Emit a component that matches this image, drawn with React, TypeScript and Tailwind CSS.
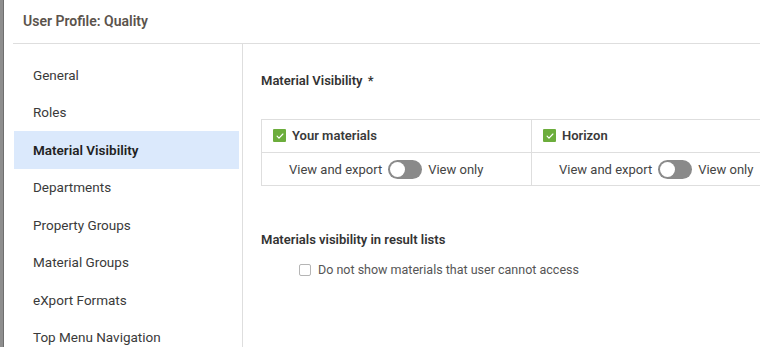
import * as React from "react"

const navItems = [
  "General",
  "Roles",
  "Material Visibility",
  "Departments",
  "Property Groups",
  "Material Groups",
  "eXport Formats",
  "Top Menu Navigation",
]

function GreenCheck() {
  return (
    <span className="flex h-[13px] w-[13px] shrink-0 items-center justify-center rounded-[1px] bg-[#6cad3c]">
      <svg viewBox="0 0 12 12" className="h-[10px] w-[10px]" fill="none">
        <path d="M2.5 6.2l2.3 2.3L9.5 3.6" stroke="white" strokeWidth="1.4" strokeLinecap="round" strokeLinejoin="round" />
      </svg>
    </span>
  )
}

function Toggle() {
  return (
    <span className="flex h-[19px] w-[34px] items-center rounded-full bg-[#8a8a8a] p-[2px]">
      <span className="h-[15px] w-[15px] rounded-full bg-white" />
    </span>
  )
}

function VisibilityCell({ title, first }: { title: string; first?: boolean }) {
  return (
    <div className={first ? "w-[270px] border-r border-[#dedede]" : "flex-1"}>
      <div className="flex h-[33px] items-center gap-[6px] border-b border-[#dedede] pl-[11px]">
        <GreenCheck />
        <span className="text-[13px] font-semibold text-[#3a3a3a]">{title}</span>
      </div>
      <div className="flex h-[32px] items-center gap-[6px] pl-[27px] pt-[2px] text-[13px] text-[#444]">
        <span>View and export</span>
        <Toggle />
        <span>View only</span>
      </div>
    </div>
  )
}

export default function App() {
  return (
    <div className="flex h-[347px] w-[760px] overflow-hidden bg-white font-['Roboto',sans-serif]">
      {/* page behind the modal */}
      <div className="w-[4px] shrink-0 border-r border-[#6f6f6f] bg-[#8e8e8e]" />

      <div className="flex min-w-0 flex-1 flex-col pl-[9px]">
        <div className="flex h-[44px] shrink-0 items-center border-b border-[#dedede] pl-[10px]">
          <span className="text-[14px] font-semibold text-[#5b534c]">User Profile: Quality</span>
        </div>

        <div className="flex min-h-0 flex-1">
          <nav className="w-[230px] shrink-0 border-r border-[#dedede] pl-[1px] pr-[3px] pt-[12px]">
            {navItems.map((item) => (
              <div
                key={item}
                className={
                  item === "Material Visibility"
                    ? "flex h-[37.5px] items-center bg-[#dbe9fc] pl-[19px] text-[13.5px] font-semibold text-[#222]"
                    : "flex h-[37.5px] items-center pl-[19px] text-[13.5px] text-[#3a3a3a]"
                }
              >
                {item}
              </div>
            ))}
          </nav>

          <div className="min-w-0 flex-1 pl-[18px] pt-[27px]">
            <div className="text-[13px] font-semibold text-[#333]">
              Material Visibility <span className="ml-[2px]">*</span>
            </div>

            <div className="mt-[28px] flex w-[520px] border border-[#dedede]">
              <VisibilityCell title="Your materials" first />
              <VisibilityCell title="Horizon" />
            </div>

            <div className="mt-[44px] text-[13px] font-semibold text-[#333]">
              Materials visibility in result lists
            </div>
            <label className="mt-[12px] flex items-center gap-[7px] pl-[38px] text-[12.5px] text-[#555]">
              <span className="h-[12px] w-[12px] rounded-[2px] border border-[#b5b5b5] bg-white" />
              Do not show materials that user cannot access
            </label>
          </div>
        </div>
      </div>
    </div>
  )
}
